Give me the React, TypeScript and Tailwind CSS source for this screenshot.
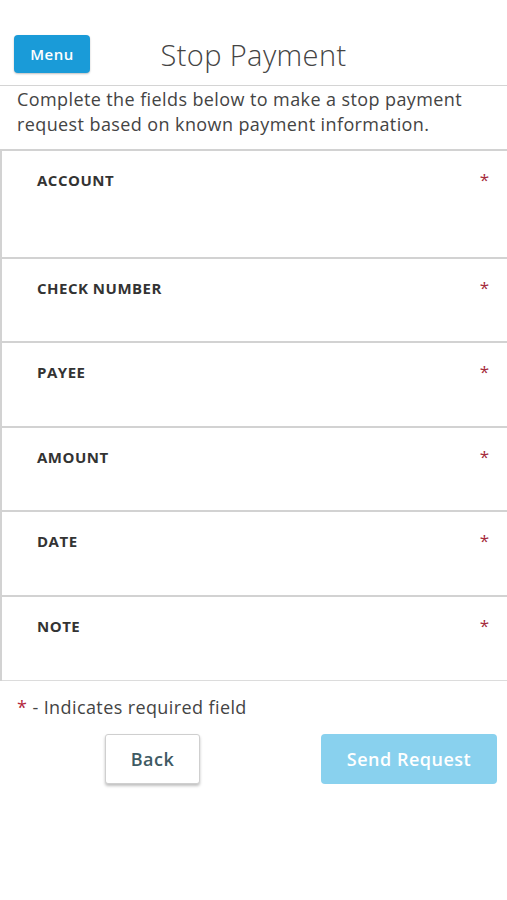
import React from "react";

const fields = [
  { label: "ACCOUNT", h: "h-[108px]" },
  { label: "CHECK NUMBER", h: "h-[84px]" },
  { label: "PAYEE", h: "h-[85px]" },
  { label: "AMOUNT", h: "h-[84px]" },
  { label: "DATE", h: "h-[85px]" },
  { label: "NOTE", h: "h-[84px]" },
];

export default function App() {
  return (
    <div className="w-[507px] h-[900px] bg-white font-['Open_Sans',sans-serif] text-[#444]">
      <div className="flex items-start h-[86px] pt-[35px] border-b border-[#d4d4d4] relative">
        <button className="ml-[14px] w-[76px] h-[38px] rounded-[4px] bg-[#1a9bd8] text-white text-[15px] font-semibold tracking-[0.5px] shadow-[0_1px_2px_rgba(0,0,0,0.25)]">
          Menu
        </button>
        <h1 className="absolute left-0 right-0 top-[35px] text-center text-[29px] font-light tracking-[0.4px] text-[#444] leading-[40px] pointer-events-none">
          Stop Payment
        </h1>
      </div>
      <p className="pl-[17px] pr-[10px] pt-[1px] text-[18px] tracking-[0.4px] leading-[25px] text-[#444] h-[63px]">
        Complete the fields below to make a stop payment request based on known payment information.
      </p>
      <div className="border-t-2 border-l-2 border-[#d2d2d2]">
        {fields.map((f, i) => (
          <div
            key={f.label}
            className={`${f.h} ${i === fields.length - 1 ? "border-b border-[#dcdcdc]" : "border-b-2 border-[#d2d2d2]"} flex justify-between items-start pl-[35px] pr-[18px] pt-[19px]`}
          >
            <span className="text-[15px] font-bold tracking-[0.5px] text-[#333] leading-[20px]">{f.label}</span>
            <span className="text-[17px] text-[#a52a3b] leading-[20px]">*</span>
          </div>
        ))}
      </div>
      <div className="pl-[17px] pt-[14px] text-[18px] tracking-[0.4px] leading-[24px] text-[#444]">
        <span className="text-[#b3283c]">*</span> - Indicates required field
      </div>
      <div className="flex mt-[15px]">
        <button className="ml-[105px] w-[95px] h-[50px] rounded-[3px] border border-[#cfcfcf] bg-white shadow-[0_2px_3px_rgba(0,0,0,0.25)] text-[18px] font-semibold tracking-[0.5px] text-[#3e5a63]">
          Back
        </button>
        <button className="ml-[121px] w-[176px] h-[50px] rounded-[4px] bg-[#89d1ee] text-white text-[18px] font-semibold tracking-[0.5px]">
          Send Request
        </button>
      </div>
    </div>
  );
}
